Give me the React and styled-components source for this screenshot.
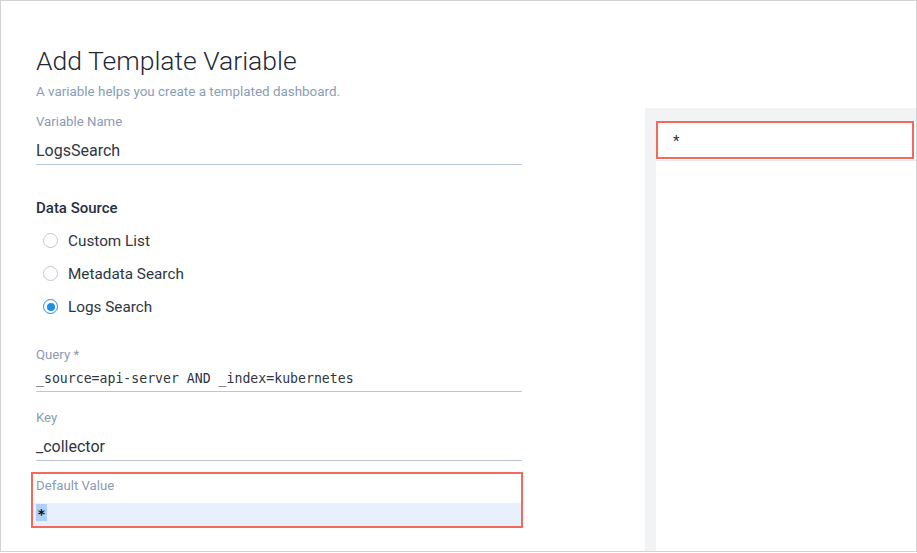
import React from "react";
import styled, { createGlobalStyle } from "styled-components";

const GlobalStyle = createGlobalStyle`
  body {
    margin: 0;
    background: #ffffff;
    font-family: Roboto, "Liberation Sans", sans-serif;
  }
`;

const Frame = styled.div`
  box-sizing: border-box;
  width: 917px;
  height: 552px;
  border: 1px solid #d2d2d2;
  display: flex;
  background: #ffffff;
  overflow: hidden;
`;

const FormColumn = styled.div`
  width: 486px;
  padding-left: 35px;
  display: flex;
  flex-direction: column;
`;

const Title = styled.h1`
  margin: 44px 0 0;
  font-size: 26.5px;
  line-height: 32px;
  font-weight: 300;
  color: #1f2937;
`;

const Subtitle = styled.div`
  margin-top: 7px;
  font-size: 13.4px;
  line-height: 16px;
  color: #8a9db5;
`;

const Label = styled.div`
  margin-top: ${(p) => p.$top}px;
  font-size: 13.2px;
  line-height: 16px;
  color: #8a9bb2;
`;

const Value = styled.div`
  margin-top: ${(p) => (p.$mono ? 5 : 10)}px;
  padding-bottom: ${(p) => (p.$mono ? 1 : 2)}px;
  border-bottom: 1px solid #b9c7d6;
  font-family: ${(p) =>
    p.$mono ? '"DejaVu Sans Mono", "Liberation Mono", monospace' : 'Roboto, "Liberation Sans", sans-serif'};
  font-size: ${(p) => (p.$mono ? "13.2px" : "16px")};
  line-height: 22px;
  color: #2f3640;
`;

const SectionTitle = styled.div`
  margin-top: 33px;
  font-size: 15px;
  line-height: 20px;
  font-weight: 500;
  color: #263040;
`;

const RadioGroup = styled.div`
  margin-top: 6px;
  display: flex;
  flex-direction: column;
`;

const RadioRow = styled.div`
  height: 33px;
  display: flex;
  align-items: center;
  padding-left: 7px;
  font-size: 15.3px;
  color: #2f3640;
`;

const RadioDot = styled.span`
  box-sizing: border-box;
  width: 15px;
  height: 15px;
  border-radius: 50%;
  border: 1.5px solid ${(p) => (p.$checked ? "#1e8fe1" : "#bfcad6")};
  margin-right: 10px;
  display: flex;
  align-items: center;
  justify-content: center;

  &::after {
    content: "";
    width: 8px;
    height: 8px;
    border-radius: 50%;
    background: ${(p) => (p.$checked ? "#1e8fe1" : "transparent")};
  }
`;

const Highlight = styled.div`
  margin: 11px -1px 0 -5px;
  border: 2px solid #f4695b;
  padding-top: 4px;
`;

const HighlightLabel = styled.div`
  padding-left: 3px;
  font-size: 13.2px;
  line-height: 16px;
  color: #8a9bb2;
`;

const SelectedInput = styled.div`
  margin-top: 9px;
  height: 23px;
  background: #e8f0fd;
  padding: 1px 0 0 3px;
  box-sizing: border-box;
`;

const Selection = styled.span`
  display: inline-block;
  width: 11px;
  height: 17px;
  background: #aed0fb;
  font-family: "DejaVu Sans", sans-serif;
  font-weight: 700;
  font-size: 14px;
  line-height: 20px;
  text-align: center;
  color: #111;
`;

const PreviewColumn = styled.div`
  margin: 107px 0 0 123px;
  flex: 1;
  background: #f2f3f5;
  padding: 13px 0 0 11px;
  display: flex;
`;

const PreviewPanel = styled.div`
  flex: 1;
  background: #ffffff;
  display: flex;
  flex-direction: column;
`;

const PreviewItem = styled.div`
  box-sizing: border-box;
  height: 38px;
  margin-right: 2px;
  border: 2px solid #f4695b;
  padding: 2px 0 0 15px;
  display: flex;
  align-items: center;
  font-size: 15px;
  color: #333;
  position: relative;
  &::after {
    content: "";
    position: absolute;
    left: -2px;
    right: -4px;
    bottom: -4px;
    height: 1px;
    background: #e4e9ef;
  }
`;

const radios = [
  { label: "Custom List", checked: false },
  { label: "Metadata Search", checked: false },
  { label: "Logs Search", checked: true },
];

export default function App() {
  return (
    <>
      <GlobalStyle />
      <Frame>
        <FormColumn>
          <Title>Add Template Variable</Title>
          <Subtitle>A variable helps you create a templated dashboard.</Subtitle>

          <Label $top={14}>Variable Name</Label>
          <Value>LogsSearch</Value>

          <SectionTitle>Data Source</SectionTitle>
          <RadioGroup>
            {radios.map((r) => (
              <RadioRow key={r.label}>
                <RadioDot $checked={r.checked} />
                {r.label}
              </RadioRow>
            ))}
          </RadioGroup>

          <Label $top={24}>Query *</Label>
          <Value $mono>_source=api-server AND _index=kubernetes</Value>

          <Label $top={18}>Key</Label>
          <Value>_collector</Value>

          <Highlight>
            <HighlightLabel>Default Value</HighlightLabel>
            <SelectedInput>
              <Selection>*</Selection>
            </SelectedInput>
          </Highlight>
        </FormColumn>

        <PreviewColumn>
          <PreviewPanel>
            <PreviewItem>*</PreviewItem>
          </PreviewPanel>
        </PreviewColumn>
      </Frame>
    </>
  );
}
